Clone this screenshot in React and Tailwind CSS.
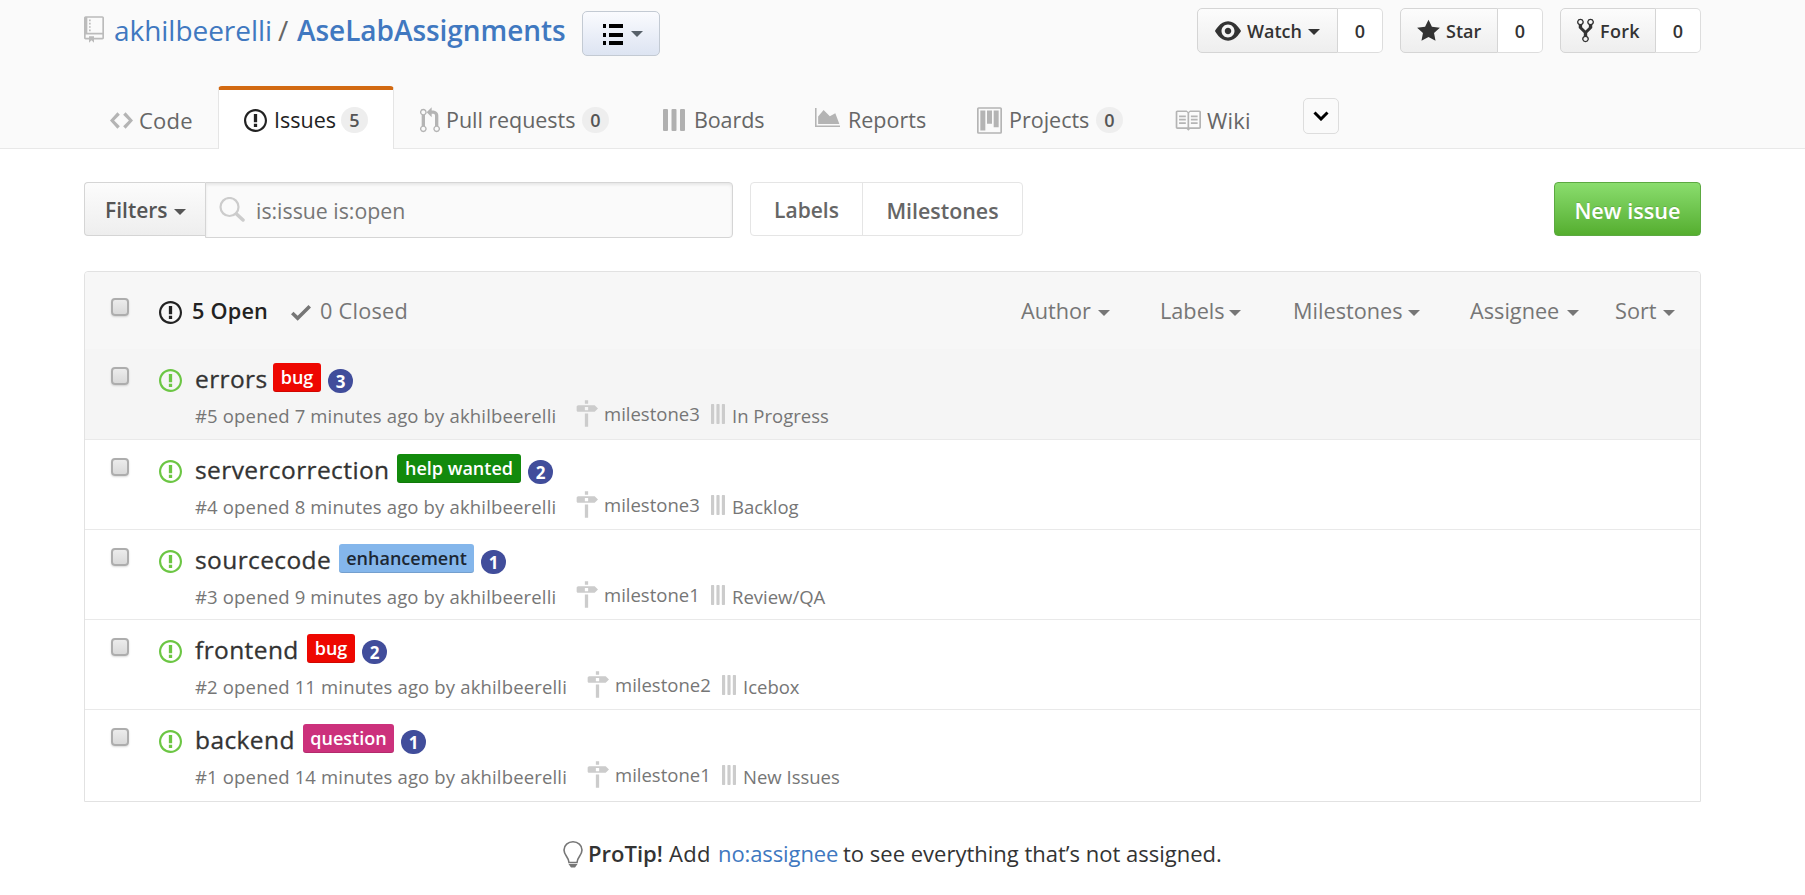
const P = {
  issue: [14, 'M7 2.3c3.14 0 5.7 2.56 5.7 5.7s-2.56 5.7-5.7 5.7A5.71 5.71 0 0 1 1.3 8c0-3.14 2.56-5.7 5.7-5.7zM7 1C3.14 1 0 4.14 0 8s3.14 7 7 7 7-3.14 7-7-3.14-7-7-7zm1 3H6v5h2V4zm0 6H6v2h2v-2z'],
  code: [14, 'M9.5 3L8 4.5 11.5 8 8 11.5 9.5 13 14 8 9.5 3zm-5 0L0 8l4.5 5L6 11.5 2.5 8 6 4.5 4.5 3z'],
  repo: [12, 'M4 9H3V8h1v1zm0-3H3v1h1V6zm0-2H3v1h1V4zm0-2H3v1h1V2zm8-1v12c0 .55-.45 1-1 1H6v2l-1.5-1.5L3 16v-2H1c-.55 0-1-.45-1-1V1c0-.55.45-1 1-1h10c.55 0 1 .45 1 1zm-1 10H1v2h2v-1h3v1h5v-2zm0-10H2v9h9V1z'],
  pull: [12, 'M11 11.28V5c-.03-.78-.34-1.47-.94-2.06C9.46 2.35 8.78 2.03 8 2H7V0L4 3l3 3V4h1c.27.02.48.11.69.31.21.2.3.42.31.69v6.28A1.993 1.993 0 0 0 10 15a1.993 1.993 0 0 0 1-3.72zm-1 2.92c-.66 0-1.2-.55-1.2-1.2 0-.65.55-1.2 1.2-1.2.65 0 1.2.55 1.2 1.2 0 .65-.55 1.2-1.2 1.2zM4 3c0-1.11-.89-2-2-2a1.993 1.993 0 0 0-1 3.72v6.56A1.993 1.993 0 0 0 2 15a1.993 1.993 0 0 0 1-3.72V4.72c.59-.34 1-.98 1-1.72zm-.8 10c0 .66-.55 1.2-1.2 1.2-.65 0-1.2-.55-1.2-1.2 0-.65.55-1.2 1.2-1.2.65 0 1.2.55 1.2 1.2zM2 4.2C1.34 4.2.8 3.65.8 3c0-.65.55-1.2 1.2-1.2.65 0 1.2.55 1.2 1.2 0 .65-.55 1.2-1.2 1.2z'],
  project: [15, 'M10 12h3V2h-3v10zm-4-2h3V2H6v8zm-4 4h3V2H2v12zm-1 1h13V1H1v14zM14 0H1a1 1 0 0 0-1 1v14a1 1 0 0 0 1 1h13a1 1 0 0 0 1-1V1a1 1 0 0 0-1-1z'],
  book: [16, 'M3 5h4v1H3V5zm0 3h4V7H3v1zm0 2h4V9H3v1zm11-5h-4v1h4V5zm0 2h-4v1h4V7zm0 2h-4v1h4V9zm2-6v9c0 .55-.45 1-1 1H9.5l-1 1-1-1H2c-.55 0-1-.45-1-1V3c0-.55.45-1 1-1h5.5l1 1 1-1H15c.55 0 1 .45 1 1zm-8 .5L7.5 3H2v9h6V3.500zm7-.5H9.5l-.5.5V12h6V3z'],
  eye: [16, 'M8.06 2C3 2 0 8 0 8s3 6 8.06 6C13 14 16 8 16 8s-3-6-7.94-6zM8 12c-2.2 0-4-1.78-4-4 0-2.2 1.8-4 4-4 2.22 0 4 1.8 4 4 0 2.22-1.78 4-4 4zm2-4c0 1.11-.89 2-2 2-1.11 0-2-.89-2-2 0-1.11.89-2 2-2 1.11 0 2 .89 2 2z'],
  star: [14, 'M14 6l-4.9-.64L7 1 4.9 5.36 0 6l3.6 3.26L2.67 14 7 11.67 11.33 14l-.93-4.74L14 6z'],
  fork: [10, 'M8 1a1.993 1.993 0 0 0-1 3.72V6L5 8 3 6V4.72A1.993 1.993 0 0 0 2 1a1.993 1.993 0 0 0-1 3.72V6.5l3 3v1.78A1.993 1.993 0 0 0 5 15a1.993 1.993 0 0 0 1-3.72V9.5l3-3V4.72A1.993 1.993 0 0 0 8 1zM2 4.2C1.34 4.2.8 3.65.8 3c0-.65.55-1.2 1.2-1.2.65 0 1.2.55 1.2 1.2 0 .65-.55 1.2-1.2 1.2zm3 10c-.66 0-1.2-.55-1.2-1.2 0-.65.55-1.2 1.2-1.2.65 0 1.2.55 1.2 1.2 0 .65-.55 1.2-1.2 1.2zm3-10c-.66 0-1.2-.55-1.2-1.2 0-.65.55-1.2 1.2-1.2.65 0 1.2.55 1.2 1.2 0 .65-.55 1.2-1.2 1.2z'],
  check: [12, 'M12 5l-8 8-4-4 1.5-1.5L4 10l6.5-6.5L12 5z'],
  milestone: [14, 'M8 2H6V0h2v2zm4 5H2c-.55 0-1-.45-1-1V4c0-.55.45-1 1-1h10l2 2-2 2zM8 4H6v2h2V4zM6 16h2V8H6v8z'],
  reports: [16, 'M0 0h1v11.200H16V12.200H0zM2 10.200V5.400L5.500 1.200l4 4L13 3.400l2.600 6.800z'],
};

function Icon({ name, className }) {
  const [w, d] = P[name];
  return (
    <svg viewBox={`0 0 ${w} 16`} className={`shrink-0 ${className}`} fill="currentColor" fillRule="evenodd">
      <path d={d} />
    </svg>
  );
}

function Caret({ className = '' }) {
  return <span className={`block h-0 w-0 shrink-0 border-x-6 border-t-6 border-x-transparent ${className}`} />;
}

function Bars({ className }) {
  return (
    <svg viewBox="0 0 22 22" preserveAspectRatio="none" className={`shrink-0 ${className}`} fill="currentColor">
      <rect x="0" y="0" width="5" height="22" rx="1" />
      <rect x="8.5" y="0" width="5" height="22" rx="1" />
      <rect x="17" y="0" width="5" height="22" rx="1" />
    </svg>
  );
}

function Check({ className }) {
  return (
    <span
      className={`block h-[18px] w-[18px] shrink-0 rounded-[4px] border-2 border-[#adadad] bg-linear-to-b from-[#ececec] to-[#d9d9d9] shadow-[0_1px_2px_rgba(0,0,0,0.15)] ${className}`}
    />
  );
}

function Count({ children }) {
  return (
    <span className="flex h-[26px] w-[27px] shrink-0 items-center justify-center rounded-full bg-[#eeeeee] text-[18px] font-semibold text-[#555]">
      {children}
    </span>
  );
}

function Social({ icon, iconClass, label, labelClass, caret, mainClass }) {
  return (
    <div className="flex h-[45px] text-[18px] font-semibold text-[#333]">
      <button className={`flex items-center rounded-l-[5px] border border-[#d5d5d5] bg-linear-to-b from-[#fcfcfc] to-[#eeeeee] ${mainClass}`}>
        <Icon name={icon} className={iconClass} />
        <span className={`pt-px whitespace-nowrap ${labelClass}`}>{label}</span>
        {caret && <Caret className="mt-[2px] border-t-[#333]" />}
      </button>
      <span className="flex w-[45px] items-center justify-center rounded-r-[5px] border border-l-0 border-[#dddddd] bg-white pt-px">0</span>
    </div>
  );
}

const issues = [
  { t: 'errors', tw: 'w-[78px]', l: 'bug', lc: 'w-[48px] bg-[#ee0701] text-white', n: 3, m: '#5 opened 7 minutes ago by akhilbeerelli', ms: 'milestone3', p: 'In Progress', row: 'h-[91px] bg-[#f5f5f5]' },
  { t: 'servercorrection', tw: 'w-[202px]', l: 'help wanted', lc: 'w-[124px] bg-[#128a0c] text-white', n: 2, m: '#4 opened 8 minutes ago by akhilbeerelli', ms: 'milestone3', p: 'Backlog', row: 'h-[90px]' },
  { t: 'sourcecode', tw: 'w-[144px]', l: 'enhancement', lc: 'w-[135px] bg-[#84b6eb] text-[#1c2733]', n: 1, m: '#3 opened 9 minutes ago by akhilbeerelli', ms: 'milestone1', p: 'Review/QA', row: 'h-[90px]' },
  { t: 'frontend', tw: 'w-[112px]', l: 'bug', lc: 'w-[48px] bg-[#ee0701] text-white', n: 2, m: '#2 opened 11 minutes ago by akhilbeerelli', ms: 'milestone2', p: 'Icebox', row: 'h-[90px]', wide: true },
  { t: 'backend', tw: 'w-[108px]', l: 'question', lc: 'w-[91px] bg-[#cc317c] text-white', n: 1, m: '#1 opened 14 minutes ago by akhilbeerelli', ms: 'milestone1', p: 'New Issues', row: 'h-[91px]', wide: true },
];

function Issue({ i, last }) {
  return (
    <li className={`flex pl-[26px] ${i.row} ${last ? '' : 'border-b border-[#e9e9e9]'}`}>
      <Check className="mt-[18px]" />
      <Icon name="issue" className="mt-[18px] ml-[30px] h-[27px] w-[23px] text-[#6cc644]" />
      <div className="ml-[13px] flex flex-col">
        <div className="mt-[14px] flex h-[30px]">
          <span className={`text-[24.5px] leading-[32px] font-medium tracking-[0.4px] whitespace-nowrap text-[#333] [-webkit-text-stroke:0.3px_#333] ${i.tw}`}>{i.t}</span>
          <span className={`flex h-[29px] items-center justify-center rounded-[3px] text-[18px] font-semibold whitespace-nowrap shadow-[inset_0_-1px_0_rgba(0,0,0,0.12)] ${i.lc}`}>{i.l}</span>
          <span className="mt-[6px] ml-[7px] flex h-[24px] w-[25px] items-center justify-center rounded-full bg-[#414d9b] pt-px text-[17px] font-bold text-white">{i.n}</span>
        </div>
        <div className="mt-[7px] flex h-[28px] text-[18.5px] leading-[31px] whitespace-nowrap text-[#767676]">
          <span className={`tracking-[0.16px] ${i.wide ? 'w-[391px]' : 'w-[380px]'}`}>{i.m}</span>
          <Icon name="milestone" className="h-[27px] w-[23px] text-[#cccccc]" />
          <span className="ml-[6px] w-[107px] leading-[28px]">{i.ms}</span>
          <Bars className="mt-[4px] h-[20px] w-[14px] text-[#cccccc]" />
          <span className="ml-[7px]">{i.p}</span>
        </div>
      </div>
    </li>
  );
}

const filters = [
  ['Author', 'w-[77px]', 'mr-[50px]'],
  ['Labels', 'w-[69px]', 'mr-[52px]'],
  ['Milestones', 'w-[115px]', 'mr-[50px]'],
  ['Assignee', 'w-[97px]', 'mr-[36px]'],
  ['Sort', 'w-[48px]', ''],
];

export default function App() {
  return (
    <div className="h-[895px] w-[1805px] overflow-hidden bg-white font-['Open_Sans','Noto_Sans',sans-serif] text-[#333]">
      <header className="flex h-[149px] flex-col border-b border-[#e8e8e8] bg-[#fafafa] pr-[104px] pl-[84px]">
        <div className="flex h-[86px] shrink-0 items-start">
          <Icon name="repo" className="mt-[16px] h-[27px] w-[20px] text-[#bbbbbb]" />
          <h1 className="mt-[8px] ml-[10px] flex text-[28px] leading-[45px] tracking-[-0.04px] whitespace-nowrap text-[#4078c0]">
            <span className="w-[164px]">akhilbeerelli</span>
            <span className="w-[19px] text-[#666]">/</span>
            <span className="w-[285px] font-semibold">AseLabAssignments</span>
          </h1>
          <button className="mt-[11px] flex h-[45px] w-[78px] items-center rounded-[5px] border border-[#c3cad3] bg-linear-to-b from-[#fafbfe] to-[#dde4f2] pl-[20px]">
            <svg viewBox="0 0 20 21" className="mt-[2px] h-[21px] w-[20px]">
              <path d="M0 0h3v4H0zM0 9h3v4H0zM0 17h3v4H0zM6 0h14v4H6zM6 9h14v4H6zM6 17h14v4H6z" />
            </svg>
            <Caret className="ml-[8px] border-t-[#576069]" />
          </button>
          <div className="mt-[8px] ml-auto flex gap-[17px]">
            <Social icon="eye" iconClass="h-[26px] w-[26px]" label="Watch" labelClass="ml-[6px] w-[61px] text-left" caret mainClass="w-[141px] pl-[17px]" />
            <Social icon="star" iconClass="h-[26px] w-[23px]" label="Star" labelClass="ml-[6px]" mainClass="w-[98px] pl-[16px]" />
            <Social icon="fork" iconClass="h-[27px] w-[17px]" label="Fork" labelClass="ml-[6px] tracking-[0.3px]" mainClass="w-[96px] pl-[16px]" />
          </div>
        </div>
        <nav className="flex h-[62px] items-stretch text-[21.5px] whitespace-nowrap text-[#666]">
          <div className="flex w-[134px] items-center pt-[6px] pl-[26px]">
            <Icon name="code" className="h-[27px] w-[23px] text-[#b4b4b4]" />
            <span className="ml-[6px] text-[22px] tracking-[0.2px]">Code</span>
          </div>
          <div className="relative flex h-[63px] w-[176px] items-center rounded-t-[4px] border-x border-t-4 border-x-[#e5e5e5] border-t-[#d26911] bg-white pt-px pl-[25px] text-[#222]">
            <Icon name="issue" className="h-[27px] w-[23px]" />
            <span className="ml-[7px] w-[67px]">Issues</span>
            <Count>5</Count>
          </div>
          <div className="flex w-[243px] items-center pt-[6px] pl-[26px]">
            <Icon name="pull" className="h-[27px] w-[20px] text-[#b4b4b4]" />
            <span className="ml-[6px] w-[136px] tracking-[-0.05px]">Pull requests</span>
            <Count>0</Count>
          </div>
          <div className="flex w-[151px] items-center pt-[6px] pl-[26px]">
            <Bars className="h-[22px] w-[22px] text-[#b0b0b0]" />
            <span className="ml-[9px] tracking-[-0.1px]">Boards</span>
          </div>
          <div className="flex w-[163px] items-center pt-[6px] pl-[26px]">
            <Icon name="reports" className="h-[25px] w-[27px] text-[#b4b4b4]" />
            <span className="ml-[7px]">Reports</span>
          </div>
          <div className="flex w-[198px] items-center pt-[6px] pl-[26px]">
            <Icon name="project" className="h-[27px] w-[25px] text-[#b4b4b4]" />
            <span className="ml-[7px] w-[87px]">Projects</span>
            <Count>0</Count>
          </div>
          <div className="flex w-[154px] items-center pt-[6px] pl-[25px]">
            <Icon name="book" className="h-[27px] w-[27px] text-[#b4b4b4]" />
            <span className="ml-[6px] text-[22px] tracking-[0.2px]">Wiki</span>
          </div>
          <button className="mt-[12px] flex h-[36px] w-[36px] items-center justify-center rounded-[5px] border border-[#dddddd]">
            <svg viewBox="0 0 16 10" className="h-[10px] w-[16px]" fill="none" stroke="#000" strokeWidth="3">
              <path d="M1.5 1.5 8 8l6.500-6.500" />
            </svg>
          </button>
        </nav>
      </header>

      <main className="pr-[104px] pl-[84px]">
        <div className="flex items-start pt-[33px] text-[21px] whitespace-nowrap">
          <button className="flex h-[54px] w-[121px] items-center rounded-l-[4px] border border-r-0 border-[#d5d5d5] bg-linear-to-b from-[#fcfcfc] to-[#eeeeee] pl-[20px] font-semibold text-[#555]">
            <span className="w-[69px] pt-[4px] text-left">Filters</span>
            <Caret className="mt-[6px] border-t-[#555]" />
          </button>
          <div className="flex h-[56px] w-[528px] items-center rounded-r-[4px] border border-[#d5d5d5] bg-[#fafafa] pl-[13px] text-[#767676] shadow-[inset_0_2px_3px_rgba(0,0,0,0.08)]">
            <svg viewBox="0 0 26 25" className="mb-[2px] h-[25px] w-[26px]" fill="none" stroke="#ccc">
              <circle cx="10.500" cy="10" r="9" strokeWidth="2.2" />
              <path d="M17.500 17l6.500 6" strokeWidth="3.500" strokeLinecap="round" />
            </svg>
            <span className="ml-[11px] pt-[2px] text-[21.3px]">is:issue is:open</span>
          </div>
          <div className="ml-[17px] flex h-[54px] rounded-[4px] border border-[#e5e5e5] pt-0 font-semibold text-[#666]">
            <span className="flex w-[112px] items-center justify-center border-r border-[#e5e5e5] pt-[4px]">Labels</span>
            <span className="flex w-[159px] items-center justify-center pt-[4px] text-[21.4px]">Milestones</span>
          </div>
          <button className="ml-auto flex h-[54px] w-[147px] items-center justify-center rounded-[4px] border border-[#5ca941] bg-linear-to-b from-[#8add6d] to-[#55ae2e] pt-[4px] text-[21.7px] font-semibold text-white [text-shadow:0_-1px_0_rgba(0,0,0,0.15)]">
            New issue
          </button>
        </div>

        <section className="mt-[33px] rounded-t-[4px] border border-[#e2e2e2]">
          <div className="flex h-[77px] items-center rounded-t-[4px] bg-[#f7f7f7] pl-[26px] text-[21.7px] whitespace-nowrap text-[#767676]">
            <Check className="mb-[7px]" />
            <Icon name="issue" className="mt-[4px] ml-[30px] h-[27px] w-[23px] text-[#222]" />
            <span className="ml-[10px] w-[99px] pt-[2px] font-semibold tracking-[0.2px] text-[#222]">5 Open</span>
            <Icon name="check" className="mt-[4px] h-[27px] w-[20px]" />
            <span className="ml-[9px] pt-[2px] tracking-[0.25px]">0 Closed</span>
            <div className="mr-[25px] ml-auto flex pt-[2px]">
              {filters.map(([label, w, gap]) => (
                <div key={label} className={`flex items-center ${gap}`}>
                  <span className={w}>{label}</span>
                  <Caret className="mt-[3px] border-t-[#767676]" />
                </div>
              ))}
            </div>
          </div>
          <ul>
            {issues.map((i, k) => (
              <Issue key={i.t} i={i} last={k === issues.length - 1} />
            ))}
          </ul>
        </section>

        <p className="mt-[31px] flex h-[40px] items-center pl-[479px] text-[22px] whitespace-nowrap">
          <svg viewBox="0 0 20 27" className="mt-[2px] h-[27px] w-[20px]" fill="none" stroke="#767676" strokeWidth="1.6">
            <path d="M6 21.500c0-5-5-7-5-12.500a9 8.200 0 0 1 18 0c0 5.500-5 7.500-5 12.500z" />
            <path d="M5.500 23h9l-2.500 3.500H8z" fill="#767676" stroke="none" />
          </svg>
          <span className="ml-[5px] w-[81px] font-semibold">ProTip!</span>
          <span className="w-[49px] tracking-[0.3px]">Add</span>
          <span className="w-[125px] tracking-[-0.1px] text-[#4078c0]">no:assignee</span>
          <span>to see everything that’s not assigned.</span>
        </p>
      </main>
    </div>
  );
}
